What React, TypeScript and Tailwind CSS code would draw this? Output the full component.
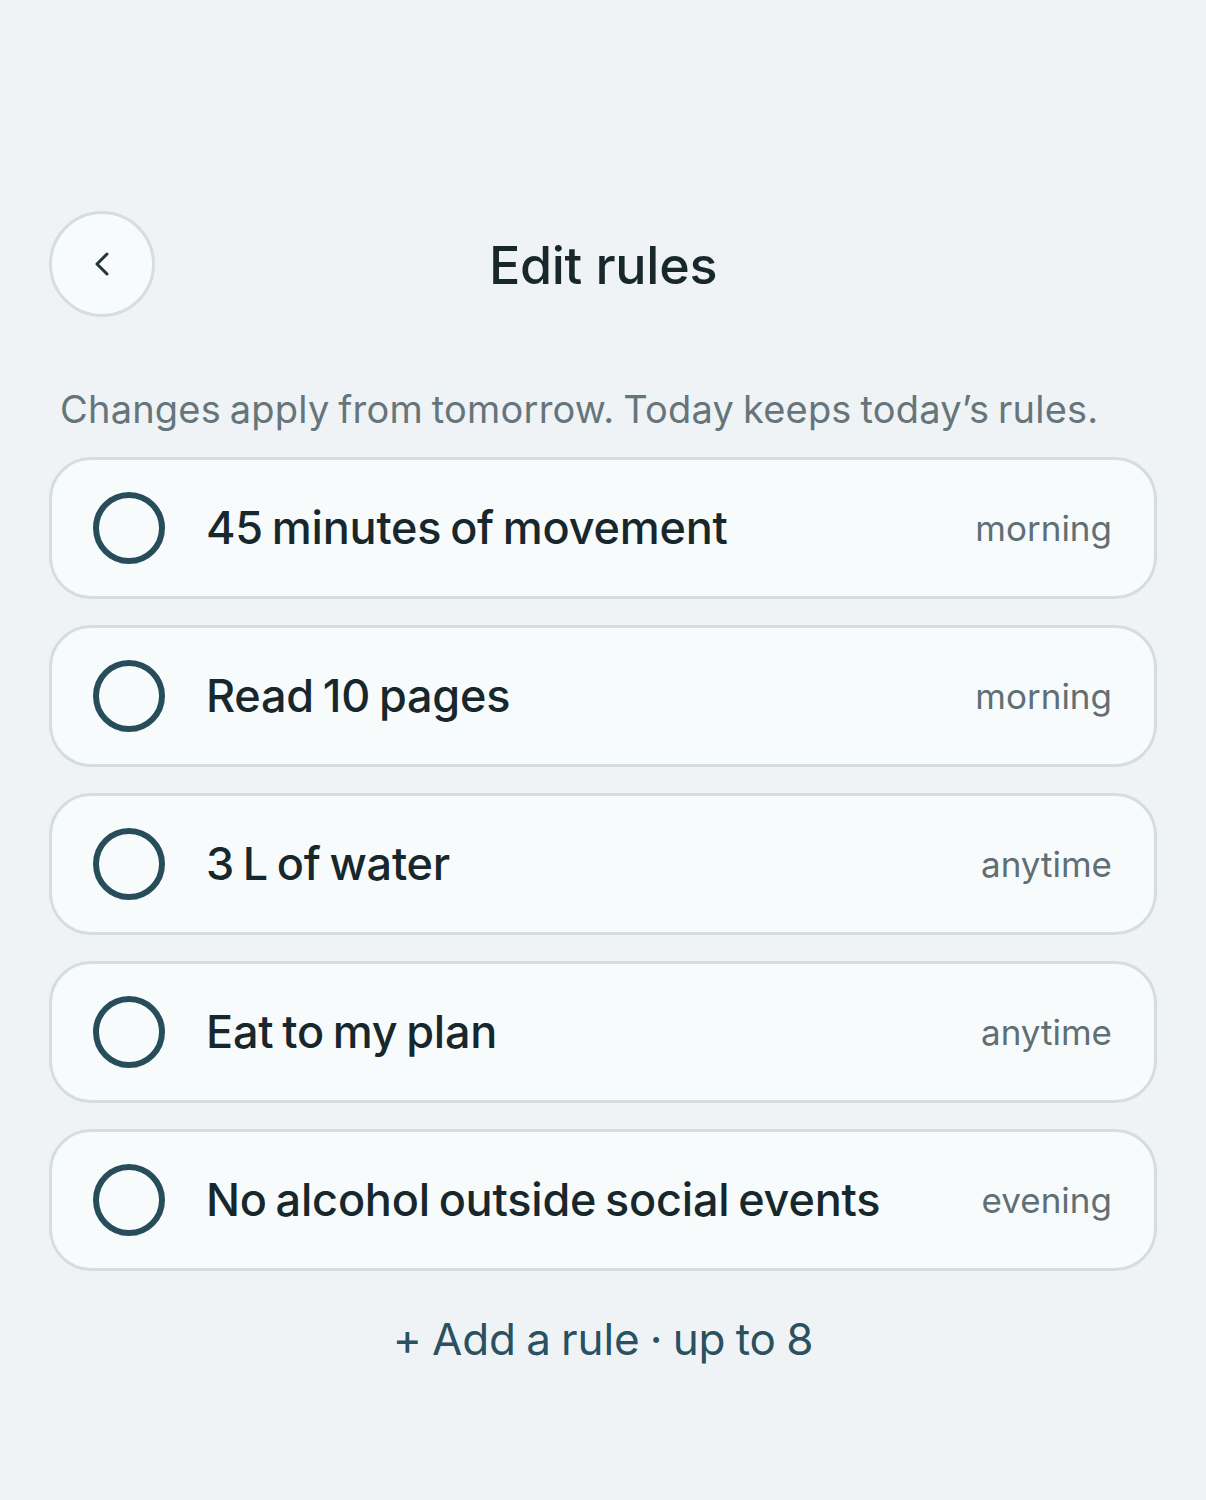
import { ChevronLeft } from "lucide-react"

const rules = [
  { name: "45 minutes of movement", when: "morning" },
  { name: "Read 10 pages", when: "morning" },
  { name: "3 L of water", when: "anytime" },
  { name: "Eat to my plan", when: "anytime" },
  { name: "No alcohol outside social events", when: "evening" },
]

function RuleRow({ name, when }: { name: string; when: string }) {
  return (
    <div className="flex h-[142px] items-center rounded-[42px] border-[3px] border-[#d5dde0] bg-[#f8fbfc] pl-[41px] pr-[42px]">
      <div className="h-[72px] w-[72px] shrink-0 rounded-full border-[6px] border-[#274d5a]" />
      <span className="ml-[41px] flex-1 text-[45px] font-medium tracking-[-0.2px] [word-spacing:-3px] text-[#17272c]">
        {name}
      </span>
      <span className="text-[35px] text-[#5f6f75]">{when}</span>
    </div>
  )
}

export default function App() {
  return (
    <div className="min-h-[1500px] bg-[#eff3f6] px-[49px] pt-[211px] font-['Inter',sans-serif]">
      <div className="relative flex h-[106px] items-center justify-center">
        <button className="absolute left-0 top-0 flex h-[106px] w-[106px] items-center justify-center rounded-full border-[3px] border-[#d5dde0] bg-[#f8fbfc]">
          <ChevronLeft className="h-[40px] w-[40px] text-[#24343a]" strokeWidth={1.8} />
        </button>
        <h1 className="mt-[4px] text-[52px] font-medium tracking-[-0.3px] text-[#17272c]">Edit rules</h1>
      </div>
      <p className="mt-[64px] pl-[11px] text-[38px] tracking-[0.2px] [word-spacing:-2px] text-[#66757a]">
        Changes apply from tomorrow. Today keeps today’s rules.
      </p>
      <div className="mt-[19px] flex flex-col gap-[26px]">
        {rules.map((r) => (
          <RuleRow key={r.name} name={r.name} when={r.when} />
        ))}
      </div>
      <div className="mt-[35px] text-center text-[44px] tracking-[-0.1px] [word-spacing:-2px] text-[#2a5160]">
        + Add a rule · up to 8
      </div>
    </div>
  )
}
